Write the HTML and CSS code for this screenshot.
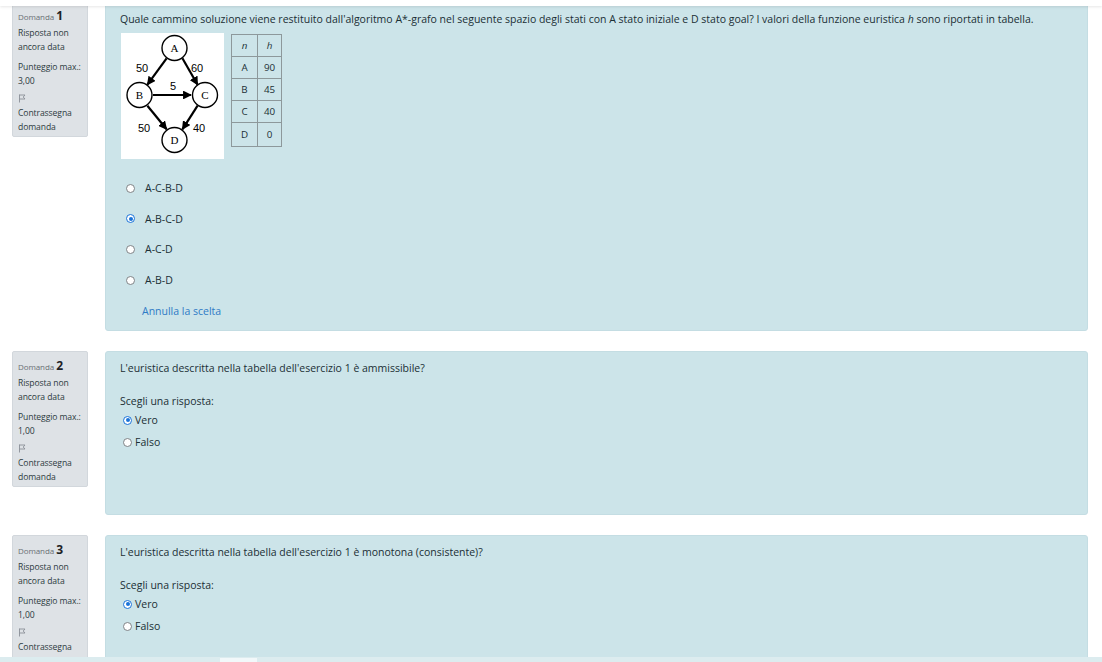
FILE: index.html
```html
<!DOCTYPE html>
<html lang="it">
<head>
<meta charset="utf-8">
<title>Quiz</title>
<link rel="stylesheet" href="styles.css">
</head>
<body>
<div class="topbar"></div>
<main class="page">
  <section class="que first">
    <aside class="info">
      <div class="qno"><span class="qlabel">Domanda</span> <b>1</b></div>
      <div class="state">Risposta non ancora data</div>
      <div class="grade">Punteggio max.: 3,00</div>
      <div class="flag"><svg width="8" height="9" viewBox="0 0 8 9"><path d="M1.5 0.5v8M1.5 1h5.5l-1.8 2 1.8 2H1.5" fill="none" stroke="#8a9097" stroke-width="0.9"/></svg></div>
      <div class="flagtext">Contrassegna domanda</div>
    </aside>
    <div class="formulation">
      <p class="qtext">Quale cammino soluzione viene restituito dall'algoritmo A*-grafo nel seguente spazio degli stati con A stato iniziale e D stato goal? I valori della funzione euristica <i>h</i> sono riportati in tabella.</p>
      <div class="figure">
        <svg class="graph" width="103" height="126" viewBox="0 0 103 126">
          <defs>
            <marker id="ar" viewBox="0 0 10 10" refX="9" refY="5" markerWidth="4" markerHeight="4" orient="auto">
              <path d="M0 0L10 5L0 10z" fill="#000"/>
            </marker>
          </defs>
          <rect width="103" height="126" fill="#fff"/>
          <g stroke="#000" stroke-width="2.2" marker-end="url(#ar)">
            <line x1="45.6" y1="25.3" x2="26.4" y2="51.7"/>
            <line x1="61.4" y1="25.3" x2="76.6" y2="51.7"/>
            <line x1="32" y1="62" x2="70" y2="62"/>
            <line x1="26.4" y1="72.7" x2="45.6" y2="96.3"/>
            <line x1="76.6" y1="72.7" x2="61.4" y2="96.3"/>
          </g>
          <g fill="#fff" stroke="#000" stroke-width="1.4">
            <circle cx="53.5" cy="15" r="12.5"/>
            <circle cx="18.5" cy="62" r="12.5"/>
            <circle cx="84" cy="62" r="12.5"/>
            <circle cx="53.5" cy="107" r="12.5"/>
          </g>
          <g class="nodelabel" text-anchor="middle">
            <text x="53.5" y="19">A</text>
            <text x="18.5" y="66">B</text>
            <text x="84" y="66">C</text>
            <text x="53.5" y="111">D</text>
          </g>
          <g class="edgelabel">
            <text x="15" y="39">50</text>
            <text x="70" y="39">60</text>
            <text x="49" y="57">5</text>
            <text x="17" y="99">50</text>
            <text x="72" y="99">40</text>
          </g>
        </svg>
        <table class="htable">
          <tr><th><i>n</i></th><th><i>h</i></th></tr>
          <tr><td>A</td><td>90</td></tr>
          <tr><td>B</td><td>45</td></tr>
          <tr><td>C</td><td>40</td></tr>
          <tr><td>D</td><td>0</td></tr>
        </table>
      </div>
      <div class="answers">
        <div class="opt"><span class="radio"></span><span>A-C-B-D</span></div>
        <div class="opt"><span class="radio on"></span><span>A-B-C-D</span></div>
        <div class="opt"><span class="radio"></span><span>A-C-D</span></div>
        <div class="opt"><span class="radio"></span><span>A-B-D</span></div>
      </div>
      <a class="reset" href="#">Annulla la scelta</a>
    </div>
  </section>

  <section class="que">
    <aside class="info">
      <div class="qno"><span class="qlabel">Domanda</span> <b>2</b></div>
      <div class="state">Risposta non ancora data</div>
      <div class="grade">Punteggio max.: 1,00</div>
      <div class="flag"><svg width="8" height="9" viewBox="0 0 8 9"><path d="M1.5 0.5v8M1.5 1h5.5l-1.8 2 1.8 2H1.5" fill="none" stroke="#8a9097" stroke-width="0.9"/></svg></div>
      <div class="flagtext">Contrassegna domanda</div>
    </aside>
    <div class="formulation tf">
      <p class="qtext">L'euristica descritta nella tabella dell'esercizio 1 è ammissibile?</p>
      <p class="prompt">Scegli una risposta:</p>
      <div class="tfopt"><span class="radio on"></span><span>Vero</span></div>
      <div class="tfopt"><span class="radio"></span><span>Falso</span></div>
    </div>
  </section>

  <section class="que">
    <aside class="info">
      <div class="qno"><span class="qlabel">Domanda</span> <b>3</b></div>
      <div class="state">Risposta non ancora data</div>
      <div class="grade">Punteggio max.: 1,00</div>
      <div class="flag"><svg width="8" height="9" viewBox="0 0 8 9"><path d="M1.5 0.5v8M1.5 1h5.5l-1.8 2 1.8 2H1.5" fill="none" stroke="#8a9097" stroke-width="0.9"/></svg></div>
      <div class="flagtext">Contrassegna domanda</div>
    </aside>
    <div class="formulation tf">
      <p class="qtext">L'euristica descritta nella tabella dell'esercizio 1 è monotona (consistente)?</p>
      <p class="prompt">Scegli una risposta:</p>
      <div class="tfopt"><span class="radio on"></span><span>Vero</span></div>
      <div class="tfopt"><span class="radio"></span><span>Falso</span></div>
    </div>
  </section>
</main>
<div class="scrollbar"><div class="thumb"></div></div>
</body>
</html>
```

FILE: styles.css
```css
* { box-sizing: border-box; }
html, body { margin: 0; padding: 0; background: #fff; }
body {
  font-family: "Open Sans", "Noto Sans", sans-serif;
  color: #1b2f35;
  overflow: hidden;
}
.topbar {
  position: fixed;
  top: 0; left: 0; right: 0;
  height: 6px;
  background: #fff;
  box-shadow: 0 1px 3px rgba(0,0,0,0.10);
  z-index: 5;
}
.page {
  padding: 1px 14px 0 12px;
  display: flex;
  flex-direction: column;
  gap: 20px;
}
.que {
  display: flex;
  gap: 17px;
  align-items: flex-start;
}
.info {
  width: 76px;
  flex: none;
  background: #dee2e6;
  border: 1px solid #d2d7dc;
  border-radius: 2px;
  padding: 7px 3px 1px 5px;
  font-size: 8.6px;
  line-height: 13.6px;
  color: #2c3a40;
  letter-spacing: -0.1px;
}
.qno { line-height: 14px; }
.qlabel { color: #6a7075; font-size: 8px; }
.qno b { font-size: 12px; font-weight: 700; color: #1d2125; }
.state { margin-top: 3px; }
.grade { margin-top: 7px; }
.flag { margin-top: 6px; height: 10px; line-height: 10px; }
.flagtext { margin-top: 3px; }
.formulation {
  flex: 1;
  background: #cce4e9;
  border: 1px solid #c4dde3;
  border-radius: 3px;
  padding: 10px 15px 12px 14px;
  font-size: 10.5px;
}
.qtext { margin: 0; line-height: 14px; }
.qtext i { font-style: italic; }
.figure {
  display: flex;
  gap: 7px;
  align-items: flex-start;
  margin: 7px 0 0 1px;
}
.graph { display: block; }
.nodelabel text { font-family: "Liberation Serif", serif; font-size: 11px; }
.edgelabel text { font-family: "Liberation Sans", sans-serif; font-size: 11px; fill: #000; }
.htable {
  border-collapse: collapse;
  font-size: 9.8px;
  margin-top: 1px;
}
.htable th, .htable td {
  border: 1px solid #8d989b;
  text-align: center;
  font-weight: 400;
  padding: 0;
  height: 22px;
}
.htable tr:last-child td { height: 24px; }
.htable th:first-child, .htable td:first-child { width: 26px; }
.htable th:last-child, .htable td:last-child { width: 24px; }
.answers { margin-top: 20px; display: flex; flex-direction: column; gap: 12.7px; }
.opt { display: flex; align-items: center; height: 18px; gap: 10px; padding-left: 6px; }
.radio {
  width: 9px; height: 9px;
  border-radius: 50%;
  border: 1px solid #7f8387;
  background: #fff;
  flex: none;
  position: relative;
}
.radio.on { border-color: #1a73d9; }
.radio.on::after {
  content: "";
  position: absolute;
  left: 1.5px; top: 1.5px;
  width: 4px; height: 4px;
  border-radius: 50%;
  background: #1a73d9;
}
.reset {
  display: block;
  margin: 15px 0 0 22px;
  color: #2f7bc6;
  text-decoration: none;
  line-height: 14px;
}
.tf { min-height: 164px; padding-top: 9px; }
.prompt { margin: 19px 0 5px 0; line-height: 14px; }
.tfopt { display: flex; align-items: center; gap: 3px; height: 14px; margin-bottom: 8px; padding-left: 3px; }
.scrollbar {
  position: fixed;
  left: 0; right: 0; bottom: 0;
  height: 5px;
  background: #dcecef;
  z-index: 5;
}
.thumb {
  position: absolute;
  left: 220px; top: 1px;
  width: 37px; height: 4px;
  background: #f2f8fa;
}
```
